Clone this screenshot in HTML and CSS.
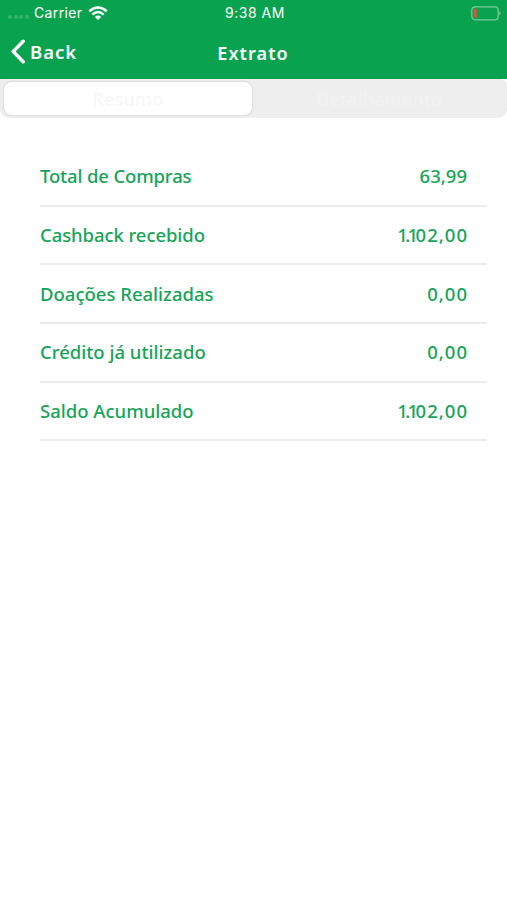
FILE: index.html
```html
<!DOCTYPE html>
<html lang="pt-BR">
<head>
<meta charset="utf-8">
<title>Extrato</title>
<link rel="stylesheet" href="styles.css">
</head>
<body>
<header class="header">
  <div class="status">
    <div class="carrier">
      <span class="dots"><i></i><i></i><i></i><i></i></span>
      <span class="carrier-name">Carrier</span>
      <svg class="wifi" width="20" height="15" viewBox="0 0 20 15" fill="none" stroke="#fff" stroke-width="2.5"><path d="M1.3 5.3Q10-2.4 18.7 5.3M4.4 8.6Q10 3.4 15.6 8.6"/><path d="M6.9 10.9Q10 8 13.1 10.9L10 14Z" fill="#fff" stroke="none"/></svg>
    </div>
    <span class="time">9:38 AM</span>
    <svg class="battery" width="31" height="15" viewBox="0 0 31 15"><rect x=".8" y=".8" width="26.4" height="13" rx="3.3" fill="none" stroke="#7ccb98" stroke-width="1.2"/><path d="M28.4 5q2.4 2.3 0 4.6Z" fill="#7ccb98"/><rect x="2.6" y="2.7" width="3" height="9.2" rx="1" fill="#ed4b3e"/></svg>
  </div>
  <nav class="nav">
    <a class="back"><svg width="15" height="25" viewBox="0 0 15 25"><path d="M12.2 2.2 2.2 12.5 12.2 22.8" fill="none" stroke="#fff" stroke-width="3.4" stroke-linecap="round" stroke-linejoin="round"/></svg><span class="back-text">Back</span></a>
    <h1 class="title">Extrato</h1>
    <span></span>
  </nav>
</header>
<div class="tabs">
  <div class="tab active">Resumo</div>
  <div class="tab">Detalhamento</div>
</div>
<main class="list">
  <div class="row"><span class="label l1">Total de Compras</span><span class="value">63,99</span></div>
  <div class="row"><span class="label l2">Cashback recebido</span><span class="value wide"><span class="tight">1.1</span>02,00</span></div>
  <div class="row"><span class="label">Doações Realizadas</span><span class="value wide">0,00</span></div>
  <div class="row"><span class="label">Crédito já utilizado</span><span class="value wide">0,00</span></div>
  <div class="row"><span class="label">Saldo Acumulado</span><span class="value wide"><span class="tight">1.1</span>02,00</span></div>
</main>
</body>
</html>
```
FILE: styles.css
```css
* { box-sizing: border-box; }
body { margin: 0; background: #fff; font-family: "Noto Sans", sans-serif; }
.header { height: 79px; background: #09a350; color: #fff; }
.status { height: 26px; display: grid; grid-template-columns: 1fr auto 1fr; align-items: center; padding: 0 5px 0 8px; font: 14px/26px Inter, sans-serif; }
.carrier { display: flex; align-items: center; }
.dots { display: flex; gap: 1.6px; width: 26px; padding-top: 7px; }
.dots i { width: 4px; height: 4px; border-radius: 50%; background: #35b36c; }
.carrier-name { width: 54px; letter-spacing: .35px; }
.time { letter-spacing: .5px; }
.battery { justify-self: end; }
.nav { height: 53px; display: grid; grid-template-columns: 1fr auto 1fr; align-items: center; padding: 0 12px 2px 11px; }
.back { display: flex; align-items: center; gap: 4px; }
.back-text { font-size: 18.5px; font-weight: 600; line-height: 24px; letter-spacing: 1px; }
.title { margin: 2px 0 0; font-size: 18px; font-weight: 600; line-height: 24px; letter-spacing: 1.1px; }
.tabs { display: grid; grid-template-columns: 248px 1fr; height: 39px; padding: 3px 0 3px 4px; background: #eee; border-radius: 0 7px 9px 9px; }
.tab { display: flex; align-items: center; justify-content: center; font-size: 18px; letter-spacing: .4px; color: #f2f2f2; }
.tab.active { background: #fff; border-radius: 8px; color: #f6f6f6; box-shadow: 0 0 3px rgba(0, 0, 0, .16); }
.list { padding: 30.2px 20px 0 40px; }
.row { height: 58.6px; display: flex; align-items: center; justify-content: space-between; padding-right: 20px; border-bottom: 2px solid #ebebeb; color: #16a457; font-size: 18.5px; font-weight: 500; line-height: 24px; white-space: nowrap; }
.l1 { letter-spacing: -.15px; }
.l2 { letter-spacing: -.08px; }
.wide { letter-spacing: 1px; margin-right: -1px; }
.tight { letter-spacing: -2.6px; }
```
